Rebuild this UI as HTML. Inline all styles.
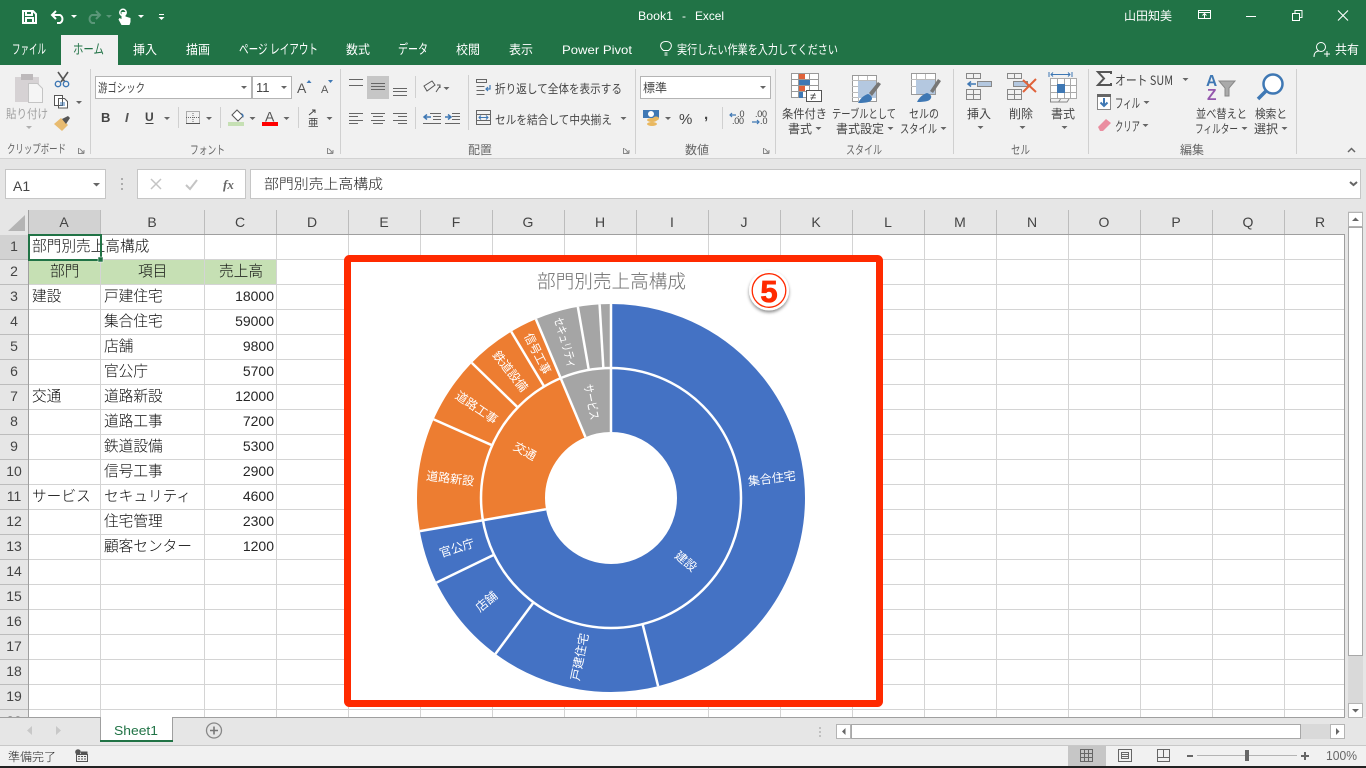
<!DOCTYPE html>
<html lang="ja"><head><meta charset="utf-8"><title>Book1 - Excel</title>
<style>
html,body{margin:0;padding:0;width:1366px;height:768px;overflow:hidden;background:#f1f1f1}
svg{display:block}
text{font-family:"Liberation Sans","Noto Sans CJK JP",sans-serif}
.j{font-family:"Noto Sans CJK JP","Liberation Sans",sans-serif}
.r{font-size:12px;fill:#454545}
.t{font-size:12.5px;fill:#fff}
.k{font-size:13.5px}
.g{font-size:12px;fill:#666}
.c{font-size:14.67px;fill:#0c0c0c;font-weight:300;font-family:"Noto Sans CJK JP","Liberation Sans",sans-serif}
.n{font-size:14px;fill:#262626}
.h{font-size:14px;fill:#444;text-anchor:middle}
.l{font-size:12px;fill:#fff;text-anchor:middle;dominant-baseline:central;font-family:"Noto Sans CJK JP",sans-serif}
</style></head><body>
<svg width="1366" height="768" viewBox="0 0 1366 768" xmlns="http://www.w3.org/2000/svg">
<defs>
<polygon id="a" points="0,0 6,0 3,3" fill="#666"/>
<polygon id="w" points="0,0 6,0 3,3" fill="#fff"/>
<filter id="sh" x="-30%" y="-30%" width="160%" height="160%"><feDropShadow dx="0" dy="2" stdDeviation="1.5" flood-color="#000" flood-opacity=".45"/></filter>
</defs>

<!-- title / tab band -->
<rect width="1366" height="65" fill="#217346"/>
<rect x="61" y="35" width="57" height="30" fill="#f1f1f1"/>
<!-- QAT -->
<path d="M23 11h10l3 3v9H23z M26 11v4h6v-4 M26 23v-5h7v5" fill="none" stroke="#fff" stroke-width="2"/>
<path d="M53 15h7a4.500 4.500 0 0 1 0 8h-3 M56 11l-4 4 4 4" fill="none" stroke="#fff" stroke-width="2"/>
<use href="#w" x="71" y="15"/>
<path d="M99 15h-7a4.500 4.500 0 0 0 0 8h3 M96 11l4 4-4 4" fill="none" stroke="#5a9678" stroke-width="2"/>
<polygon points="106,15 112,15 109,18" fill="#5a9678"/>
<circle cx="123" cy="12.500" r="3.200" fill="none" stroke="#fff" stroke-width="1.500"/>
<path d="M121.500 12v7l-2-1-1 1.500 3 5.500h8l1-3v-4l-5-1.500v-4.500z" fill="#fff"/>
<use href="#w" x="138" y="15"/>
<path d="M159 14.500h5" stroke="#fff"/><use href="#w" x="158.500" y="17"/>
<text class="t" x="638" y="20" textLength="35" lengthAdjust="spacingAndGlyphs" style="font-size:12px">Book1</text>
<text class="t" x="682" y="20" style="font-size:12px">-</text>
<text class="t" x="695" y="20" textLength="29" lengthAdjust="spacingAndGlyphs" style="font-size:12px">Excel</text>
<text class="t j" x="1124" y="20" textLength="48" lengthAdjust="spacingAndGlyphs" style="font-size:12px">山田知美</text>
<path d="M1198.500 10.500h12v8h-12z M1198.500 12.500h12 M1204.500 18v-4 M1202.500 15.500l2-2 2 2" fill="none" stroke="#fff"/>
<path d="M1246 16.500h10" stroke="#fff"/>
<path d="M1292.500 13.500h7v7h-7z M1295 13v-2.500h7v7h-2.500" fill="none" stroke="#fff"/>
<path d="M1338 10.500l10 10 M1348 10.500l-10 10" stroke="#fff" stroke-width="1.100"/>
<!-- tabs -->
<g>
<text class="t k" x="12" y="54" textLength="34" lengthAdjust="spacingAndGlyphs">ファイル</text>
<text class="t k" x="73" y="54" textLength="31" lengthAdjust="spacingAndGlyphs" style="fill:#217346">ホーム</text>
<text class="t" x="133" y="54" textLength="24" lengthAdjust="spacingAndGlyphs">挿入</text>
<text class="t" x="186" y="54" textLength="24" lengthAdjust="spacingAndGlyphs">描画</text>
<text class="t k" x="239" y="54" textLength="79" lengthAdjust="spacingAndGlyphs">ページ レイアウト</text>
<text class="t" x="346" y="54" textLength="24" lengthAdjust="spacingAndGlyphs">数式</text>
<text class="t k" x="398" y="54" textLength="30" lengthAdjust="spacingAndGlyphs">データ</text>
<text class="t" x="456" y="54" textLength="24" lengthAdjust="spacingAndGlyphs">校閲</text>
<text class="t" x="509" y="54" textLength="24" lengthAdjust="spacingAndGlyphs">表示</text>
<text class="t" x="562" y="54" textLength="70" lengthAdjust="spacingAndGlyphs" style="font-size:12px">Power Pivot</text>
<text class="t" x="677" y="54" textLength="161" lengthAdjust="spacingAndGlyphs">実行したい作業を入力してください</text>
<text class="t" x="1335" y="54" textLength="24" lengthAdjust="spacingAndGlyphs">共有</text>
</g>
<path d="M665 53.500h3 M665 55.500h3 M664 51c-5-4-3-9 2.500-9s7.500 5 2.500 9z" transform="translate(-.500,-.500)" fill="none" stroke="#fff"/>
<circle cx="1321" cy="47" r="4.500" fill="none" stroke="#fff"/>
<path d="M1314 57c0-5 3-6 5-6 M1324 54h6 M1327 51v6" fill="none" stroke="#fff"/>

<!-- ribbon -->
<rect y="65" width="1366" height="93" fill="#f1f1f1"/>
<rect y="158" width="1366" height="1" fill="#d2d2d2"/>
<path d="M90.500 69v85 M340.500 69v85 M635.500 69v85 M775.500 69v85 M953.500 69v85 M1088.500 69v85 M1296.500 69v85" stroke="#d0d0d0"/>

<!-- clipboard -->
<rect x="15" y="77" width="24" height="25" fill="#d6d2d4"/><rect x="21" y="74" width="12" height="6" fill="#bdb9bb"/>
<path d="M28.500 83.500h9l5 5v14h-14z" fill="#f5f5f5" stroke="#c4c4c4"/>
<text class="g j" x="6" y="118" textLength="42" lengthAdjust="spacingAndGlyphs" style="fill:#a0a0a0">貼り付け</text>
<polygon points="26,126 32,126 29,129" fill="#b0b0b0"/>
<path d="M58 72l7 10 M68 72l-7 10" stroke="#555" stroke-width="1.600"/>
<circle cx="58" cy="84" r="2.700" fill="none" stroke="#3f78b4" stroke-width="1.400"/><circle cx="66" cy="84" r="2.700" fill="none" stroke="#3f78b4" stroke-width="1.400"/>
<path d="M54.500 95.500h8v10h-8z M58.500 98.500h6l3 3v6.500h-9z" fill="#fff" stroke="#555"/>
<path d="M60 103h5 M60 105h5" stroke="#3f78b4"/>
<use href="#a" x="76" y="101"/>
<path d="M54 124l7-6 7 7-6 6z" fill="#e8bb70"/><path d="M62 119l6-3 2 2-4 6z" fill="#555"/>
<text class="g j" x="7" y="153" textLength="59" lengthAdjust="spacingAndGlyphs">クリップボード</text>
<path d="M79.500 148.500h-1v5h5v-1 M80 149l4 4 M84 150v3h-3" fill="none" stroke="#888"/>

<!-- font -->
<rect x="95.500" y="76.500" width="156" height="22" fill="#fff" stroke="#b4b4b4"/>
<rect x="252.500" y="76.500" width="39" height="22" fill="#fff" stroke="#b4b4b4"/>
<text class="r j" x="98" y="92" textLength="47" lengthAdjust="spacingAndGlyphs">游ゴシック</text>
<text class="r" x="256" y="92" style="font-size:13px">11</text>
<use href="#a" x="241" y="86"/><use href="#a" x="281" y="86"/>
<text x="297" y="93" style="font-size:14px;fill:#555">A</text><polygon points="306.500,83 311.500,83 309,80" fill="#3f78b4"/>
<text x="321" y="93" style="font-size:11px;fill:#555">A</text><polygon points="328,80 333,80 330.500,83" fill="#3f78b4"/>
<text x="101" y="122" style="font-size:13px;font-weight:700;fill:#444">B</text>
<text x="125" y="122" style="font-size:13px;font-style:italic;font-weight:700;fill:#555">I</text>
<text x="145" y="121" style="font-size:12px;font-weight:700;fill:#444">U</text><path d="M145.500 123.500h8" stroke="#444"/>
<use href="#a" x="164" y="117"/>
<path d="M178.500 107v21 M220.500 107v21 M298.500 107v21" stroke="#d0d0d0"/>
<path d="M186.500 111.500h13v12h-13z M193 111v13 M186 117.500h14" fill="none" stroke="#666" stroke-dasharray="1 1"/><path d="M186 123.500h14" stroke="#555"/>
<use href="#a" x="206" y="117"/>
<path d="M232 115l5-5 6 6-5 5z" fill="#fff" stroke="#555"/><path d="M241 113c3 1 3 3 2 5z" fill="#3f78b4"/>
<rect x="228" y="122" width="16" height="4" fill="#c6e0b4"/>
<use href="#a" x="249.500" y="117"/>
<text x="265" y="121.500" style="font-size:14px;fill:#555">A</text><rect x="262" y="122" width="16" height="4" fill="#f00"/>
<use href="#a" x="283.500" y="117"/>
<text class="j" x="308" y="126" style="font-size:10.500px;fill:#444">亜</text><path d="M309 115l6-5 M312 110h3v3" fill="none" stroke="#444"/>
<use href="#a" x="326.500" y="117"/>
<text class="g j" x="190" y="154" textLength="35" lengthAdjust="spacingAndGlyphs">フォント</text>
<path d="M328.500 148.500h-1v5h5v-1 M329 149l4 4 M333 150v3h-3" fill="none" stroke="#888"/>

<!-- alignment -->
<rect x="367" y="76" width="22" height="23" fill="#c6c6c6"/>
<path d="M349 79.500h14 M349 85.500h14 M371 83.500h14 M371 86.500h14 M371 89.500h14 M393 88.500h14 M393 91.500h14 M393 95.500h14" stroke="#666"/>
<path d="M415.500 76v22 M415.500 107v22 M468.500 75v55" stroke="#d0d0d0"/>
<path d="M349 113.500h14 M349 116.500h9 M349 120.500h14 M349 123.500h9 M371 113.500h14 M373 116.500h10 M371 120.500h14 M373 123.500h10 M393 113.500h14 M398 116.500h9 M393 120.500h14 M398 123.500h9" stroke="#666"/>
<path d="M430 113.500h11 M433 116.500h8 M433 119.500h8 M423 123.500h18 M452 113.500h8 M452 116.500h8 M452 119.500h8 M445 123.500h15" stroke="#666"/>
<path d="M424 117h7 M427 114.500l-3 2.500 3 2.500 M445 117h6 M448 114.500l3 2.500-3 2.500" fill="none" stroke="#3f78b4" stroke-width="1.500"/>
<path d="M424 86l8-5 3 4-8 6z" fill="none" stroke="#555"/><path d="M436 92l4-6 M437 85h3v3" fill="none" stroke="#555"/>
<use href="#a" x="443.500" y="87"/>
<path d="M476.500 79.500h10v3h-10z M476.500 86.500h8 M476.500 90.500h8 M476.500 94.500h8" fill="none" stroke="#666"/>
<path d="M490 85v4h-4 M488 87l-2 2 2 2" fill="none" stroke="#3f78b4" stroke-width="1.200"/>
<text class="r j" x="495" y="93" textLength="127" lengthAdjust="spacingAndGlyphs">折り返して全体を表示する</text>
<path d="M476.500 110.500h14v14h-14z M476.500 114.500h14 M476.500 120.500h14" fill="none" stroke="#666"/>
<path d="M479 117.500h9 M481 115.500l-2 2 2 2 M486 115.500l2 2-2 2" fill="none" stroke="#3f78b4"/>
<text class="r j" x="495" y="124" textLength="117" lengthAdjust="spacingAndGlyphs">セルを結合して中央揃え</text>
<use href="#a" x="620.500" y="117"/>
<text class="g j" x="468" y="154" textLength="24" lengthAdjust="spacingAndGlyphs">配置</text>
<path d="M624.500 148.500h-1v5h5v-1 M625 149l4 4 M629 150v3h-3" fill="none" stroke="#888"/>

<!-- number -->
<rect x="640.500" y="76.500" width="130" height="22" fill="#fff" stroke="#b4b4b4"/>
<text class="r j" x="643" y="92" textLength="24" lengthAdjust="spacingAndGlyphs">標準</text>
<use href="#a" x="760" y="86"/>
<rect x="643" y="110" width="16" height="8" fill="#3f78b4"/><circle cx="651" cy="114" r="3" fill="#fff"/>
<ellipse cx="652" cy="120" rx="5" ry="2" fill="#e9b860"/><ellipse cx="652" cy="124" rx="5" ry="2" fill="#e9b860"/><ellipse cx="656" cy="118.500" rx="3" ry="2" fill="#e9b860"/>
<use href="#a" x="665" y="117"/>
<text x="679" y="124" style="font-size:15px;fill:#444">%</text>
<text x="704" y="119" style="font-size:15px;font-weight:700;fill:#444">,</text>
<path d="M722.500 107v22" stroke="#d0d0d0"/>
<text x="737" y="117" style="font-size:9px;fill:#444">.0</text><text x="732" y="124" style="font-size:9px;fill:#444" textLength="12">.00</text>
<path d="M730 115h6 M732 113l-2 2 2 2" fill="none" stroke="#3f78b4" stroke-width="1.200"/>
<text x="755" y="117" style="font-size:9px;fill:#444" textLength="12">.00</text><text x="760" y="124" style="font-size:9px;fill:#444">.0</text>
<path d="M752 122h7 M757 120l2 2-2 2" fill="none" stroke="#3f78b4" stroke-width="1.200"/>
<text class="g j" x="685" y="154" textLength="24" lengthAdjust="spacingAndGlyphs">数値</text>
<path d="M764.500 148.500h-1v5h5v-1 M765 149l4 4 M769 150v3h-3" fill="none" stroke="#888"/>

<!-- styles -->
<rect x="791.500" y="73.500" width="27" height="24" fill="#fff"/>
<path d="M791.500 73.500h27v24h-27z M791 79.500h27 M791 85.500h27 M791 91.500h27 M798.500 73v25 M809.500 73v25" fill="none" stroke="#999"/>
<rect x="799" y="74" width="6" height="5" fill="#e0623a"/><rect x="799" y="80" width="11" height="5" fill="#3f78b4"/><rect x="799" y="86" width="6" height="5" fill="#e0623a"/><rect x="799" y="92" width="4" height="6" fill="#3f78b4"/>
<rect x="806.500" y="90.500" width="15" height="11" fill="#fff" stroke="#555"/>
<text x="810" y="100" style="font-size:11px;fill:#333">≠</text>
<path d="M852.500 75.500h24v26h-24z" fill="#fff" stroke="#999"/>
<path d="M852 80.500h24 M852 86.500h24 M852 92.500h24 M852 97.500h24 M858.500 76v26 M867.500 76v26" stroke="#bbb"/>
<rect x="858" y="81" width="18" height="17" fill="#b4c8e0"/>
<path d="M869 93l9-11 3 2-9 12z" fill="#777"/><path d="M858 103c3-6 7-8 10-9 3 1 4 3 4 5-1 3-5 4-14 4z" fill="#3f78b4"/>
<text class="r j" x="782" y="118" textLength="45" lengthAdjust="spacingAndGlyphs">条件付き</text>
<text class="r j" x="788" y="133" textLength="24" lengthAdjust="spacingAndGlyphs">書式</text><use href="#a" x="815.500" y="127"/>
<text class="r j" x="832" y="118" textLength="64" lengthAdjust="spacingAndGlyphs">テーブルとして</text>
<text class="r j" x="836" y="133" textLength="48" lengthAdjust="spacingAndGlyphs">書式設定</text><use href="#a" x="887.500" y="127"/>
<path d="M911.500 73.500h24v21h-24z" fill="#fff" stroke="#999"/>
<path d="M911 79.500h24 M911 86.500h24 M916.500 74v20 M925.500 74v20" stroke="#bbb"/>
<rect x="916" y="80" width="19" height="14" fill="#b4c8e0"/>
<path d="M930 91l8-12 3 2-8 12z" fill="#777"/><path d="M917 102c3-6 7-8 10-9 3 1 5 3 4 5-1 3-5 4-14 4z" fill="#3f78b4"/>
<text class="r j" x="909" y="118" textLength="30" lengthAdjust="spacingAndGlyphs">セルの</text>
<text class="r j" x="900" y="133" textLength="37" lengthAdjust="spacingAndGlyphs">スタイル</text><use href="#a" x="940.500" y="127"/>
<text class="g j" x="846" y="154" textLength="36" lengthAdjust="spacingAndGlyphs">スタイル</text>

<!-- cells -->
<path d="M966.500 73.500h14v5h-14z M973.500 73v5 M977.500 81.500h14v5h-14z M984.500 81v5 M966.500 89.500h14v10h-14z M966 94.500h14 M973.500 89v10" fill="none" stroke="#888"/>
<rect x="978" y="82" width="13" height="4" fill="#b4c8e0"/>
<path d="M968 84h8 M971 81.500l-3 2.500 3 2.500" fill="none" stroke="#3f78b4" stroke-width="1.500"/>
<path d="M1007.500 73.500h14v5h-14z M1014.500 73v5 M1013.500 81.500h14v5h-14z M1007.500 89.500h14v10h-14z M1007 94.500h14 M1014.500 89v10" fill="none" stroke="#888"/>
<rect x="1014" y="82" width="13" height="4" fill="#b4c8e0"/>
<path d="M1023 80l13 12 M1036 79l-13 13" stroke="#e0623a" stroke-width="2"/>
<path d="M1049 72v5 M1072 72v5 M1051 74.500h19 M1053 72.500l-2 2 2 2 M1068 72.500l2 2-2 2" fill="none" stroke="#3f78b4"/>
<rect x="1050.500" y="78.500" width="26" height="20" fill="#fff"/>
<path d="M1050.500 78.500h26v20h-26z M1050 85.500h27 M1050 92.500h27 M1057.500 78v21 M1064.500 78v21 M1070.500 78v21" fill="none" stroke="#aaa"/>
<rect x="1057" y="84" width="8" height="9" fill="#3f78b4"/>
<path d="M1050.500 99v3h8l2-3 M1059 102h8l2-3" fill="none" stroke="#888"/>
<text class="r j" x="967" y="118" textLength="24" lengthAdjust="spacingAndGlyphs">挿入</text><use href="#a" x="977.500" y="126"/>
<text class="r j" x="1009" y="118" textLength="24" lengthAdjust="spacingAndGlyphs">削除</text><use href="#a" x="1019.500" y="126"/>
<text class="r j" x="1051" y="118" textLength="24" lengthAdjust="spacingAndGlyphs">書式</text><use href="#a" x="1061.500" y="126"/>
<text class="g j" x="1011" y="154" textLength="19" lengthAdjust="spacingAndGlyphs">セル</text>

<!-- editing -->
<path d="M1111 74v-2h-13l6 6.500-6 6.500h13v-2" fill="none" stroke="#555" stroke-width="2"/>
<text class="r j" x="1115" y="85" textLength="58" lengthAdjust="spacingAndGlyphs" style="font-size:13px">オート SUM</text><use href="#a" x="1182.500" y="78"/>
<rect x="1097.500" y="94.500" width="13" height="15" fill="#fff" stroke="#888"/><rect x="1097" y="94" width="14" height="3" fill="#666"/>
<path d="M1104 98v8 M1100.500 102.500l3.500 3.500 3.500-3.500" fill="none" stroke="#3f78b4" stroke-width="2"/>
<text class="r j" x="1115" y="108" textLength="25" lengthAdjust="spacingAndGlyphs" style="font-size:13px">フィル</text><use href="#a" x="1143.500" y="101"/>
<path d="M1098 127l8-8 5 4-8 8h-3z" fill="#ea8ea0"/>
<text class="r j" x="1115" y="131" textLength="25" lengthAdjust="spacingAndGlyphs" style="font-size:13px">クリア</text><use href="#a" x="1142.500" y="124"/>
<text x="1206" y="86" style="font-size:15.500px;font-weight:700;fill:#3f78b4">A</text>
<text x="1207" y="100" style="font-size:15.500px;font-weight:700;fill:#9457ad">Z</text>
<path d="M1219 81h16l-6 7v8h-4v-8z" fill="#aaa" stroke="#888"/>
<circle cx="1273" cy="84" r="9.500" fill="#fff" stroke="#3f78b4" stroke-width="2.500"/>
<path d="M1266 91l-8 8" stroke="#3f78b4" stroke-width="3.500"/>
<text class="r j" x="1196" y="118" textLength="51" lengthAdjust="spacingAndGlyphs">並べ替えと</text>
<text class="r j" x="1195" y="133" textLength="43" lengthAdjust="spacingAndGlyphs">フィルター</text><use href="#a" x="1241.500" y="127"/>
<text class="r j" x="1255" y="118" textLength="32" lengthAdjust="spacingAndGlyphs">検索と</text>
<text class="r j" x="1254" y="133" textLength="24" lengthAdjust="spacingAndGlyphs">選択</text><use href="#a" x="1281.500" y="127"/>
<text class="g j" x="1180" y="154" textLength="24" lengthAdjust="spacingAndGlyphs">編集</text>
<path d="M1348 152l3.500-3.500 3.500 3.500" fill="none" stroke="#666" stroke-width="1.500"/>

<!-- formula bar -->
<rect y="159" width="1366" height="51" fill="#e6e6e6"/>
<rect x="5.500" y="169.500" width="100" height="29" fill="#fff" stroke="#c6c6c6"/>
<text x="13" y="191" style="font-size:14px;fill:#444">A1</text>
<polygon points="93,183 100,183 96.500,186.500" fill="#666"/>
<path d="M122 178v2 M122 183v2 M122 188v2" stroke="#999" stroke-width="1.500"/>
<rect x="137.500" y="169.500" width="108" height="29" fill="#fff" stroke="#c6c6c6"/>
<path d="M151 179l10 10 M161 179l-10 10" stroke="#c4c4c4" stroke-width="1.500"/>
<path d="M186 185l4 4 7-9" fill="none" stroke="#c4c4c4" stroke-width="2"/>
<text x="223" y="189" style="font-family:'Liberation Serif',serif;font-size:13px;font-style:italic;font-weight:700;fill:#666">fx</text>
<rect x="250.500" y="169.500" width="1110" height="29" fill="#fff" stroke="#c6c6c6"/>
<text class="j" x="264" y="189" textLength="119" lengthAdjust="spacingAndGlyphs" style="font-size:14px;font-weight:300;fill:#222">部門別売上高構成</text>
<path d="M1350 182l3.500 3 3.500-3" fill="none" stroke="#666" stroke-width="2"/>

<!-- sheet -->
<rect y="210" width="1366" height="507" fill="#e6e6e6"/>
<rect x="29" y="235" width="1315" height="482" fill="#fff"/>
<rect x="28" y="210" width="72" height="24" fill="#d2d2d2"/>
<rect x="0" y="235" width="28" height="25" fill="#d2d2d2"/>
<polygon points="25,215 25,231 8,231" fill="#b4b4b4"/>
<rect x="29" y="260" width="247" height="25" fill="#c6e0b4"/>
<path d="M29 259.500H1344M29 284.500H1344M29 309.500H1344M29 334.500H1344M29 359.500H1344M29 384.500H1344M29 409.500H1344M29 434.500H1344M29 459.500H1344M29 484.500H1344M29 509.500H1344M29 534.500H1344M29 559.500H1344M29 584.500H1344M29 609.500H1344M29 634.500H1344M29 659.500H1344M29 684.500H1344M29 709.500H1344" stroke="#d4d4d4"/>
<path d="M100.500 235V717M204.500 235V717M276.500 235V717M348.500 235V717M420.500 235V717M492.500 235V717M564.500 235V717M636.500 235V717M708.500 235V717M780.500 235V717M852.500 235V717M924.500 235V717M996.500 235V717M1068.500 235V717M1140.500 235V717M1212.500 235V717M1284.500 235V717" stroke="#d4d4d4"/>
<path d="M100.500 210V234M204.500 210V234M276.500 210V234M348.500 210V234M420.500 210V234M492.500 210V234M564.500 210V234M636.500 210V234M708.500 210V234M780.500 210V234M852.500 210V234M924.500 210V234M996.500 210V234M1068.500 210V234M1140.500 210V234M1212.500 210V234M1284.500 210V234" stroke="#bcbcbc"/>
<path d="M0 259.500H28M0 284.500H28M0 309.500H28M0 334.500H28M0 359.500H28M0 384.500H28M0 409.500H28M0 434.500H28M0 459.500H28M0 484.500H28M0 509.500H28M0 534.500H28M0 559.500H28M0 584.500H28M0 609.500H28M0 634.500H28M0 659.500H28M0 684.500H28M0 709.500H28" stroke="#bcbcbc"/>
<path d="M28.500 210V717 M28 234.500H1344 M1344.500 234V717.500 M0 717.500H1345" stroke="#9f9f9f"/>

<g>
<text class="h" x="64" y="227">A</text><text class="h" x="152" y="227">B</text><text class="h" x="240" y="227">C</text><text class="h" x="312" y="227">D</text><text class="h" x="384" y="227">E</text><text class="h" x="456" y="227">F</text><text class="h" x="528" y="227">G</text><text class="h" x="600" y="227">H</text><text class="h" x="672" y="227">I</text><text class="h" x="744" y="227">J</text><text class="h" x="816" y="227">K</text><text class="h" x="888" y="227">L</text><text class="h" x="960" y="227">M</text><text class="h" x="1032" y="227">N</text><text class="h" x="1104" y="227">O</text><text class="h" x="1176" y="227">P</text><text class="h" x="1248" y="227">Q</text><text class="h" x="1320" y="227">R</text>
</g>
<g transform="translate(0,-1)">
<text class="h" x="14" y="252">1</text><text class="h" x="14" y="277">2</text><text class="h" x="14" y="302">3</text><text class="h" x="14" y="327">4</text><text class="h" x="14" y="352">5</text><text class="h" x="14" y="377">6</text><text class="h" x="14" y="402">7</text><text class="h" x="14" y="427">8</text><text class="h" x="14" y="452">9</text><text class="h" x="14" y="477">10</text><text class="h" x="14" y="502">11</text><text class="h" x="14" y="527">12</text><text class="h" x="14" y="552">13</text><text class="h" x="14" y="577">14</text><text class="h" x="14" y="602">15</text><text class="h" x="14" y="627">16</text><text class="h" x="14" y="652">17</text><text class="h" x="14" y="677">18</text><text class="h" x="14" y="702">19</text><text class="h" x="14" y="727">20</text>

<text class="c" x="32" y="252">部門別売上高構成</text>
<text class="c" x="50" y="277">部門</text><text class="c" x="138" y="277">項目</text><text class="c" x="219" y="277">売上高</text>
<text class="c" x="32" y="302">建設</text><text class="c" x="104" y="302">戸建住宅</text><text class="n" x="274" y="302" text-anchor="end">18000</text>
<text class="c" x="104" y="327">集合住宅</text><text class="n" x="274" y="327" text-anchor="end">59000</text>
<text class="c" x="104" y="352">店舗</text><text class="n" x="274" y="352" text-anchor="end">9800</text>
<text class="c" x="104" y="377">官公庁</text><text class="n" x="274" y="377" text-anchor="end">5700</text>
<text class="c" x="32" y="402">交通</text><text class="c" x="104" y="402">道路新設</text><text class="n" x="274" y="402" text-anchor="end">12000</text>
<text class="c" x="104" y="427">道路工事</text><text class="n" x="274" y="427" text-anchor="end">7200</text>
<text class="c" x="104" y="452">鉄道設備</text><text class="n" x="274" y="452" text-anchor="end">5300</text>
<text class="c" x="104" y="477">信号工事</text><text class="n" x="274" y="477" text-anchor="end">2900</text>
<text class="c" x="32" y="502">サービス</text><text class="c" x="104" y="502">セキュリティ</text><text class="n" x="274" y="502" text-anchor="end">4600</text>
<text class="c" x="104" y="527">住宅管理</text><text class="n" x="274" y="527" text-anchor="end">2300</text>
<text class="c" x="104" y="552">顧客センター</text><text class="n" x="274" y="552" text-anchor="end">1200</text>
</g>

<rect x="29" y="235" width="72" height="25" fill="none" stroke="#217346" stroke-width="2"/>
<rect x="98" y="257" width="5" height="5" fill="#217346" stroke="#fff" stroke-width=".5"/>

<!-- chart -->
<rect x="347.500" y="258.500" width="532" height="445" rx="2" fill="#fff" stroke="#ff2a00" stroke-width="7"/>
<text class="j" x="537" y="288" textLength="149" lengthAdjust="spacingAndGlyphs" style="font-size:18.600px;fill:#6e6e6e;font-weight:300">部門別売上高構成</text>
<g fill="none" stroke-width="64" transform="rotate(-90 611 498)">
<circle cx="611" cy="498" r="162" pathLength="128000" stroke="#4472c4" stroke-dasharray="92500 128000"/>
<circle cx="611" cy="498" r="162" pathLength="128000" stroke="#ed7d31" stroke-dasharray="27400 128000" stroke-dashoffset="-92500"/>
<circle cx="611" cy="498" r="162" pathLength="128000" stroke="#a5a5a5" stroke-dasharray="8100 128000" stroke-dashoffset="-119900"/>
<circle cx="611" cy="498" r="98" pathLength="128000" stroke="#4472c4" stroke-dasharray="92500 128000"/>
<circle cx="611" cy="498" r="98" pathLength="128000" stroke="#ed7d31" stroke-dasharray="27400 128000" stroke-dashoffset="-92500"/>
<circle cx="611" cy="498" r="98" pathLength="128000" stroke="#a5a5a5" stroke-dasharray="8100 128000" stroke-dashoffset="-119900"/>
</g>
<circle cx="611" cy="498" r="130" fill="none" stroke="#fff" stroke-width="2.500"/>
<g stroke="#fff" stroke-width="2.500">
<line x1="611" y1="304" x2="611" y2="368"/>
<line x1="611" y1="304" x2="611" y2="368" transform="rotate(165.94 611 498)"/>
<line x1="611" y1="304" x2="611" y2="368" transform="rotate(216.56 611 498)"/>
<line x1="611" y1="304" x2="611" y2="368" transform="rotate(244.13 611 498)"/>
<line x1="611" y1="304" x2="611" y2="368" transform="rotate(260.16 611 498)"/>
<line x1="611" y1="304" x2="611" y2="368" transform="rotate(293.91 611 498)"/>
<line x1="611" y1="304" x2="611" y2="368" transform="rotate(314.16 611 498)"/>
<line x1="611" y1="304" x2="611" y2="368" transform="rotate(329.06 611 498)"/>
<line x1="611" y1="304" x2="611" y2="368" transform="rotate(337.22 611 498)"/>
<line x1="611" y1="304" x2="611" y2="368" transform="rotate(350.16 611 498)"/>
<line x1="611" y1="304" x2="611" y2="368" transform="rotate(356.63 611 498)"/>
<line x1="611" y1="368" x2="611" y2="432"/>
<line x1="611" y1="368" x2="611" y2="432" transform="rotate(260.16 611 498)"/>
<line x1="611" y1="368" x2="611" y2="432" transform="rotate(337.22 611 498)"/>
</g>
<g transform="translate(611 498)">
<text class="l" transform="rotate(82.97) translate(0,-162) rotate(-90)">集合住宅</text>
<text class="l" transform="rotate(191.25) translate(0,-162) rotate(90)">戸建住宅</text>
<text class="l" transform="rotate(230.34) translate(0,-162) rotate(90)">店舗</text>
<text class="l" transform="rotate(252.14) translate(0,-162) rotate(90)">官公庁</text>
<text class="l" transform="rotate(277.03) translate(0,-162) rotate(90)">道路新設</text>
<text class="l" transform="rotate(304.03) translate(0,-162) rotate(90)">道路工事</text>
<text class="l" transform="rotate(321.61) translate(0,-162) rotate(90)">鉄道設備</text>
<text class="l" transform="rotate(333.14) translate(0,-162) rotate(90)" textLength="44" lengthAdjust="spacingAndGlyphs">信号工事</text>
<text class="l" transform="rotate(343.69) translate(0,-162) rotate(90)" textLength="52" lengthAdjust="spacingAndGlyphs">セキュリティ</text>
<text class="l" transform="rotate(130.08) translate(0,-98) rotate(-90)">建設</text>
<text class="l" transform="rotate(298.69) translate(0,-98) rotate(90)">交通</text>
<text class="l" transform="rotate(348.61) translate(0,-98) rotate(90)" textLength="36" lengthAdjust="spacingAndGlyphs">サービス</text>
</g>
<circle cx="769" cy="290.500" r="20" fill="#fff" filter="url(#sh)"/>
<circle cx="769" cy="290.500" r="16.800" fill="none" stroke="#ff2a00" stroke-width="1.300"/>
<text x="769" y="302" text-anchor="middle" style="font-size:31px;font-weight:700;fill:#ff2a00;stroke:#ff2a00;stroke-width:.8">5</text>

<!-- v scrollbar -->
<rect x="1345" y="210" width="21" height="507" fill="#e6e6e6"/>
<path d="M1344.500 234V717.500" stroke="#9f9f9f"/>
<rect x="1348" y="211" width="15" height="506" fill="#d9d9d9"/>
<rect x="1348.500" y="212.500" width="14" height="14" fill="#fff" stroke="#b4b4b4"/>
<rect x="1348.500" y="227.500" width="14" height="428" fill="#fff" stroke="#a8a8a8"/>
<rect x="1348.500" y="703.500" width="14" height="14" fill="#fff" stroke="#b4b4b4"/>
<polygon points="1352,221 1359,221 1355.500,217.500" fill="#666"/>
<polygon points="1352,709 1359,709 1355.500,712.500" fill="#666"/>

<!-- tab bar -->
<rect y="718" width="1366" height="28" fill="#e6e6e6"/>
<path d="M0 717.500H1345" stroke="#9f9f9f"/>
<polygon points="32,726 27,730.500 32,735" fill="#c8c8c8"/><polygon points="56,726 61,730.500 56,735" fill="#c8c8c8"/>
<path d="M100.500 717v24 M172.500 717v24" stroke="#9f9f9f"/>
<rect x="101" y="717" width="71" height="23" fill="#fff"/>
<rect x="100" y="740" width="73" height="2" fill="#217346"/>
<text x="114" y="735" textLength="44" lengthAdjust="spacingAndGlyphs" style="font-size:13px;fill:#217346">Sheet1</text>
<circle cx="214" cy="730.500" r="7.500" fill="none" stroke="#888" stroke-width="1.300"/>
<path d="M210 730.500h8 M214 726.500v8" stroke="#777" stroke-width="1.600"/>
<path d="M820 727v2 M820 731v2 M820 735v2" stroke="#999"/>
<rect x="836" y="724" width="494" height="15" fill="#d9d9d9"/>
<rect x="836.500" y="724.500" width="14" height="14" fill="#fff" stroke="#b4b4b4"/>
<polygon points="845.500,728 845.500,735 842,731.500" fill="#666"/>
<rect x="851.500" y="724.500" width="449" height="14" fill="#fff" stroke="#a8a8a8"/>
<rect x="1330.500" y="724.500" width="14" height="14" fill="#fff" stroke="#b4b4b4"/>
<polygon points="1336,728 1336,735 1339.500,731.500" fill="#666"/>

<!-- status -->
<rect y="745" width="1366" height="1" fill="#c8c8c8"/>
<rect y="746" width="1366" height="20" fill="#f1f1f1"/>
<rect y="766" width="1366" height="2" fill="#222"/>
<text class="j" x="8" y="761" textLength="48" lengthAdjust="spacingAndGlyphs" style="font-size:12px;font-weight:300;fill:#222">準備完了</text>
<circle cx="78" cy="752" r="2.800" fill="#555"/>
<path d="M81 751.500h6.500v2.500H81z" fill="#555"/>
<path d="M76.500 754.500h11v7h-11z" fill="none" stroke="#555"/>
<path d="M78 756.500h8 M78 759h8" stroke="#555" stroke-dasharray="2 1"/>
<rect x="1068" y="746" width="38" height="20" fill="#c6c6c6"/>
<path d="M1080.500 749.500h12v12h-12z M1084.500 749v13 M1088.500 749v13 M1080 753.500h13 M1080 757.500h13" fill="none" stroke="#666"/>
<path d="M1118.500 749.500h13v12h-13z M1121.500 752.500h7v6h-7z M1122 754.500h6 M1122 756.500h6" fill="none" stroke="#666"/>
<path d="M1157.500 749.500h12v12h-12z M1157 757.500h6.500v-8 M1163.500 757.500h6" fill="none" stroke="#666"/>
<path d="M1187 756h6" stroke="#666" stroke-width="2"/>
<path d="M1197 755.500h100" stroke="#b4b4b4"/>
<rect x="1245" y="750" width="4" height="11" fill="#666"/>
<path d="M1301 756h8 M1305 752v8" stroke="#666" stroke-width="2"/>
<text x="1326" y="760" textLength="31" lengthAdjust="spacingAndGlyphs" style="font-size:13px;fill:#666">100%</text>
</svg>
</body></html>
